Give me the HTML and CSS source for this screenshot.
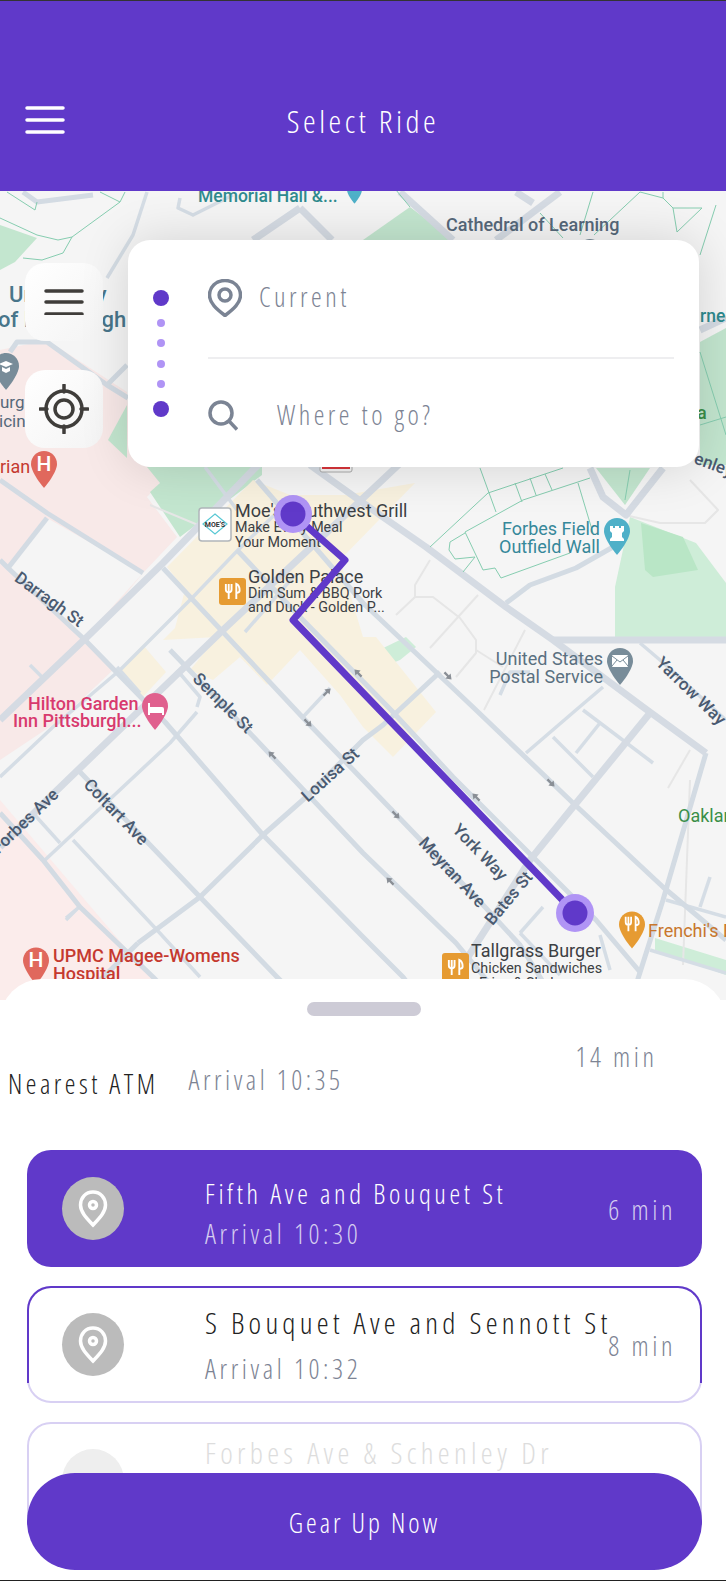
FILE: index.html
```html
<!DOCTYPE html>
<html lang="en">
<head>
    <meta charset="UTF-8">
    <meta name="viewport" content="width=device-width, initial-scale=1.0">
    <title>Select Ride</title>

    <link rel="stylesheet" href="styles.css">
</head>
<body>

<div id="app">
    <header id="topbar">
        <svg class="menu-icon" width="40" height="28" viewBox="0 0 40 28">
            <path d="M2 2h36M2 14h36M2 26h36" />
        </svg>
        <h1>Select Ride</h1>
    </header>

    <div id="map">
        <svg class="map-art" width="726" height="809" viewBox="0 191 726 809">
            <defs>
                <symbol id="pin" viewBox="0 0 26 37">
                    <path d="M13 0C5.8 0 0 5.8 0 13c0 9 13 24 13 24s13-15 13-24C26 5.8 20.2 0 13 0z" />
                </symbol>
                <symbol id="cutlery" viewBox="0 0 20 20">
                    <path class="cut" d="M3 2v6c0 2 1.500 3 3 3s3-1 3-3V2M6 2v16M14 18V2c2.500 1 3.500 4 3.500 7 0 1.500-1 2.500-3.500 2.500" />
                </symbol>
                <path id="arrow" d="M-5-1.200h5v-2.500l5 3.700-5 3.700v-2.500h-5z" />
            </defs>

            <rect class="land" x="0" y="191" width="726" height="809" />

            <!-- areas -->
            <polygon class="pink" points="0,350 47,340 127,392 130,440 160,483 147,497 177,537 143,573 88,640 113,670 60,720 0,760" />
            <polygon class="land" points="47,518 143,573 85,637 8,568" />
            <polygon class="pink-l" points="0,800 0,1000 170,1000" />
            <polygon class="green" points="147,467 262,467 262,475 180,537 150,492 160,483" />
            <polygon class="green" points="0,225 37,238 15,262 0,270" />
            <polygon class="green" points="127,405 108,440 127,458" />
            <polygon class="green" points="363,240 410,207 453,240" />
            <polygon class="green" points="596,468 650,468 625,505" />
            <polygon class="green" points="700,342 726,328 726,465 700,465" />
            <polygon class="green-l" points="615,637 615,587 630,517 696,543 726,583 726,637" />
            <polygon class="green-d" points="641,523 683,537 698,570 653,577 645,570" />
            <polygon class="green-l" points="373,653 406,637 416,647 400,660 383,667" />
            <polygon class="green-l" points="655,938 726,960 726,975 655,950" />
            <polygon class="beige" points="167,567 253,480 290,495 345,495 415,483 340,560 363,637 376,637 436,712 393,757 363,727 340,695 300,650 267,685 240,657 213,680 190,670 217,637 163,640 175,628 185,590" />
            <polygon class="beige" points="120,670 143,645 166,672 140,700" />

            <!-- paths -->
            <g class="walk">
                <polyline points="430,560 415,585 415,597 396,615" />
                <polyline points="415,597 433,597 460,618 476,640 476,653 456,677" />
                <polyline points="478,595 430,648" />
                <polyline points="476,650 503,667" />
                <polyline points="525,630 484,710" />
                <polyline points="625,515 660,523 705,523 718,510 690,480" />
                <polyline points="683,965 690,780" />
                <polyline points="690,750 668,788" />
                <polyline points="150,505 198,525" />
            </g>

            <!-- small streets -->
            <g class="road-t">
                <polyline points="147,192 133,235 107,278" />
                <polyline points="180,198 178,208 193,215 233,195" />
                <polyline points="237,510 205,467" />
                <polyline points="0,777 53,727 120,670 193,597 238,550 290,500" />
                <polyline points="45,860 170,743 197,712" />
                <polyline points="73,840 157,930 200,977" />
                <polyline points="33,813 60,843" />
                <polyline points="303,717 330,688" />
                <polyline points="117,667 140,693" />
                <polyline points="177,670 200,697 197,707" />
                <polyline points="30,665 43,678" />
                <polyline points="66,920 78,908 66,918" />
                <polyline points="526,753 576,710 603,687" />
                <polyline points="553,737 593,777" />
                <polyline points="576,753 600,723" />
                <polyline points="583,710 653,763" />
                <polyline points="640,643 660,660 726,720" />
                <polyline points="710,877 700,907" />
                <polyline points="520,933 543,907" />
                <polyline points="520,933 560,975" />
                <polyline points="666,900 726,917" />
                <polyline points="650,950 726,973" />
                <polyline points="610,970 600,935" />
                <polyline points="500,695 510,672 530,672" />
                <polyline points="245,632 295,575" />
            </g>

            <!-- streets -->
            <g class="road">
                <polyline points="10,352 17,342 47,342 107,385 128,398" />
                <polyline points="107,385 127,365" />
                <polyline points="23,192 37,202 93,195" />
                <polyline points="0,480 47,513 143,573" />
                <polyline points="47,518 8,568" />
                <polyline points="0,560 8,568 85,640 165,722 263,835 363,937 403,977 420,1000" />
                <polyline points="0,813 43,860 80,907 153,977 175,1000" />
                <polyline points="80,772 200,897 277,977 300,1000" />
                <polyline points="163,568 307,722 363,780 485,907 520,945 545,985" />
                <polyline points="170,650 247,730 363,853 456,943 495,990" />
                <polyline points="138,943 200,897 263,835 305,798 363,740 383,725 440,672" />
                <polyline points="237,550 300,617 391,710 453,777 533,857 596,920 640,972" />
                <polyline points="257,480 363,603 476,710 573,803 663,887 726,940" />
                <polyline points="506,603 530,585 576,568 613,547" />
                <polyline points="706,753 663,900 636,985" />
                <polyline points="80,1000 138,943" />
            </g>

            <!-- main roads -->
            <g class="road-m">
                <polyline points="0,720 87,637 163,563 253,470 300,425" />
                <polyline points="0,847 50,797 140,710 223,630 393,470 425,440" />
                <polyline points="310,465 380,515 426,547 506,607 553,640 643,707 706,753" />
                <polyline points="553,640 726,640" />
                <polyline points="650,713 573,807 530,860 450,985" />
                <polyline points="590,468 603,497 626,515 663,468" />
                <polyline points="400,192 453,240" />
                <polyline points="560,192 496,240" />
                <polyline points="516,192 533,203" />
                <polyline points="300,208 253,240" />
                <polyline points="300,208 332,240" />
                <polyline points="700,330 726,318" />
            </g>

            <!-- one way arrows -->
            <g class="arrows">
                <use href="#arrow" transform="translate(327 692) rotate(-45)" />
                <use href="#arrow" transform="translate(448 676) rotate(45)" />
                <use href="#arrow" transform="translate(272 755) rotate(225)" />
                <use href="#arrow" transform="translate(308 723) rotate(45)" />
                <use href="#arrow" transform="translate(476 797) rotate(225)" />
                <use href="#arrow" transform="translate(396 815) rotate(45)" />
                <use href="#arrow" transform="translate(390 881) rotate(225)" />
                <use href="#arrow" transform="translate(551 783) rotate(45)" />
                <use href="#arrow" transform="translate(358 673) rotate(225)" />
            </g>

            <!-- campus outlines -->
            <g class="outline">
                <polyline points="0,218 37,235 58,240 72,237 120,202 125,192" />
                <polyline points="72,237 63,253 42,260 23,258" />
                <polyline points="7,192 35,210 37,202" />
                <polyline points="100,192 120,202" />
                <polyline points="593,192 580,235" />
                <polyline points="640,192 594,235" />
                <polyline points="640,192 663,198 673,208 702,208 677,232 673,208" />
                <polyline points="663,192 663,198" />
                <polyline points="716,205 700,255" />
                <polyline points="540,213 563,238" />
                <polyline points="488,493 563,468" />
                <polyline points="430,547 488,493" />
                <polyline points="465,532 523,500 590,478" />
                <polyline points="465,532 483,570 495,568 501,578 570,553" />
                <polyline points="465,533 450,542 449,550 455,559 475,557 463,572" />
                <polyline points="480,468 496,512" />
                <polyline points="515,483 522,502" />
                <polyline points="530,478 536,495" />
                <polyline points="545,474 552,490" />
                <polyline points="578,483 593,533" />
                <polyline points="700,352 726,435" />
                <polyline points="700,425 726,417" />
                <polyline points="630,470 625,500" />
                <polyline points="396,190 410,207" />
            </g>

            <!-- places -->
            <text class="lb lb-teal lb-b" x="198" y="202">Memorial Hall &amp;...</text>
            <use href="#pin" class="pin-teal" x="347" y="182" width="15" height="22" />
            <text class="lb lb-slate lb-b lb-cath" x="446" y="231">Cathedral of Learning</text>
            <circle class="pin-slate" cx="590" cy="250" r="11" />

            <text class="lb lb-uni lb-b" x="9" y="302">University</text>
            <text class="lb lb-uni lb-b" x="-2" y="327">of Pittsburgh</text>
            <use href="#pin" class="pin-slate" x="-7" y="353" width="26" height="37" />
            <path class="cap" d="M-1 364l7-3 7 3-7 3zM2 367v4l4 2 4-2v-4l-4 2z" />
            <text class="lb lb-slate lb-s" x="0" y="408">urg</text>
            <text class="lb lb-slate lb-s" x="-1" y="427">icine</text>

            <text class="lb lb-teal lb-b" x="700" y="322">rnegie</text>
            <text class="lb lb-forest lb-b" x="697" y="419">a</text>
            <text class="lb lb-road" transform="translate(712 470) rotate(20)" text-anchor="middle">enley</text>

            <text class="lb lb-red" x="0" y="473">rian</text>
            <use href="#pin" class="pin-red" x="31" y="451" width="26" height="37" />
            <text class="lb lb-pinletter" x="44" y="471" text-anchor="middle">H</text>

            <rect class="sign" x="320" y="455" width="32" height="17" rx="2" />
            <rect class="sign-red" x="322" y="466" width="28" height="3" />

            <rect class="badge" x="199" y="508" width="32" height="33" rx="3" />
            <path class="badge-mark" d="M215 514l12 10-12 10-12-10z" />
            <text class="badge-text" x="215" y="527" text-anchor="middle">MOE'S</text>
            <text class="lb lb-dark" x="235" y="517">Moe's Southwest Grill</text>
            <text class="lb lb-dark lb-sm" x="235" y="532">Make Every Meal</text>
            <text class="lb lb-dark lb-sm" x="235" y="547">Your Moment</text>

            <rect class="food" x="219" y="578" width="27" height="27" rx="3" />
            <use href="#cutlery" x="223" y="582" width="19" height="19" />
            <text class="lb lb-dark" x="248" y="583">Golden Palace</text>
            <text class="lb lb-dark lb-sm" x="248" y="598">Dim Sum &amp; BBQ Pork</text>
            <text class="lb lb-dark lb-sm" x="248" y="612">and Duck - Golden P...</text>

            <text class="lb lb-teal2" x="600" y="535" text-anchor="end">Forbes Field</text>
            <text class="lb lb-teal2" x="600" y="553" text-anchor="end">Outfield Wall</text>
            <use href="#pin" class="pin-teal" x="604" y="518" width="26" height="37" />
            <path class="pin-mark" d="M610 527h3v2h2v-2h4v2h2v-2h3v5l-2 2v4l2 2v2h-14v-2l2-2v-4l-2-2z" transform="translate(0 -1)" />

            <text class="lb lb-usps" x="603" y="665" text-anchor="end">United States</text>
            <text class="lb lb-usps" x="603" y="683" text-anchor="end">Postal Service</text>
            <use href="#pin" class="pin-slate" x="607" y="648" width="26" height="37" />
            <rect class="pin-mark" x="612" y="655" width="16" height="12" rx="1" />
            <path class="env" d="M612 656l8 6 8-6M612 666l5-6M628 666l-5-6" />

            <text class="lb lb-pinkt lb-b" x="28" y="710">Hilton Garden</text>
            <text class="lb lb-pinkt lb-b" x="13" y="727">Inn Pittsburgh...</text>
            <use href="#pin" class="pin-pink" x="142" y="693" width="26" height="37" />
            <path class="pin-mark" d="M148 703h2v4h12a2 2 0 0 1 2 2v6h-2v-2h-12v2h-2z" />

            <text class="lb lb-forest" x="678" y="822">Oakland</text>
            <use href="#pin" class="pin-orange" x="619" y="911" width="26" height="38" />
            <use href="#cutlery" x="623" y="915" width="18" height="18" />
            <text class="lb lb-orange" x="648" y="937">Frenchi's Bar</text>

            <rect class="food" x="442" y="953" width="27" height="30" rx="3" />
            <use href="#cutlery" x="446" y="958" width="19" height="19" />
            <text class="lb lb-dark" x="471" y="957">Tallgrass Burger</text>
            <text class="lb lb-dark lb-sm" x="471" y="973">Chicken Sandwiches</text>
            <text class="lb lb-dark lb-sm" x="479" y="988">Fries &amp; Shakes</text>

            <use href="#pin" class="pin-red" x="23" y="947" width="26" height="38" />
            <text class="lb lb-pinletter" x="36" y="967" text-anchor="middle">H</text>
            <text class="lb lb-red lb-b" x="53" y="962">UPMC Magee-Womens</text>
            <text class="lb lb-red lb-b" x="53" y="980">Hospital</text>

            <!-- street names -->
            <text class="lb lb-road" transform="translate(46 604) rotate(36)" text-anchor="middle">Darragh St</text>
            <text class="lb lb-road" transform="translate(219 707) rotate(45)" text-anchor="middle">Semple St</text>
            <text class="lb lb-road" transform="translate(334 779) rotate(-42)" text-anchor="middle">Louisa St</text>
            <text class="lb lb-road" transform="translate(29 825) rotate(-44)" text-anchor="middle">Forbes Ave</text>
            <text class="lb lb-road" transform="translate(112 816) rotate(46)" text-anchor="middle">Coltart Ave</text>
            <text class="lb lb-road" transform="translate(448 876) rotate(47)" text-anchor="middle">Meyran Ave</text>
            <text class="lb lb-road" transform="translate(476 856) rotate(46)" text-anchor="middle">York Way</text>
            <text class="lb lb-road" transform="translate(513 902) rotate(-50)" text-anchor="middle">Bates St</text>
            <text class="lb lb-road" transform="translate(687 695) rotate(44)" text-anchor="middle">Yarrow Way</text>

            <!-- route -->
            <polyline class="route" points="293,514 345,560 293,620 575,913" />
            <circle class="stop-halo" cx="293" cy="514" r="19" />
            <circle class="stop" cx="293" cy="514" r="12.500" />
            <circle class="stop-halo" cx="575" cy="913" r="19" />
            <circle class="stop" cx="575" cy="913" r="12.500" />
        </svg>

        <div id="map-buttons">
            <button class="map-button">
                <svg width="40" height="26" viewBox="0 0 40 26"><path d="M2 2h36M2 13h36M2 25h36" /></svg>
            </button>
            <button class="map-button">
                <svg width="50" height="50" viewBox="0 0 50 50">
                    <circle cx="25" cy="25" r="18" />
                    <circle cx="25" cy="25" r="9" />
                    <path d="M25 1v7M25 42v7M1 25h7M42 25h7" />
                </svg>
            </button>
        </div>

        <div id="search-card">
            <div id="route-dots">
                <span class="dot-big"></span>
                <span class="dot-small"></span>
                <span class="dot-small"></span>
                <span class="dot-small"></span>
                <span class="dot-small"></span>
                <span class="dot-big"></span>
            </div>
            <div id="fields">
                <div class="field field-from">
                    <svg width="34" height="38" viewBox="0 0 34 38">
                        <path d="M17 1.500C8 1.500 1.500 8 1.500 16c0 8 7 14 15.500 20.500C25.500 30 32.500 24 32.500 16 32.500 8 26 1.500 17 1.500z" />
                        <circle cx="17" cy="16" r="6" />
                    </svg>
                    <span>Current</span>
                </div>
                <div class="field field-to">
                    <svg width="30" height="31" viewBox="0 0 30 31">
                        <circle cx="13" cy="13" r="11" />
                        <path d="M21 21l8 8.500" />
                    </svg>
                    <span>Where to go?</span>
                </div>
            </div>
        </div>
    </div>

    <section id="sheet">
        <div id="handle"></div>

        <div id="summary">
            <span class="summary-name">Nearest ATM</span>
            <span class="summary-arrival">Arrival 10:35</span>
            <span class="summary-time">14 min</span>
        </div>

        <ul id="stops">
            <li class="stop-card active">
                <span class="stop-icon">
                    <svg width="30" height="38" viewBox="0 0 30 38"><path d="M15 2C7.500 2 2.500 8 2.500 15c0 7 6 13 12.500 20 6.500-7 12.500-13 12.500-20C27.500 8 22.500 2 15 2z" /><circle cx="15" cy="15" r="3.500" /></svg>
                </span>
                <div class="stop-text">
                    <div class="stop-name">Fifth Ave and Bouquet St</div>
                    <div class="stop-arrival">Arrival 10:30</div>
                </div>
                <span class="stop-time">6 min</span>
            </li>
            <li class="stop-card outlined">
                <span class="stop-icon">
                    <svg width="30" height="38" viewBox="0 0 30 38"><path d="M15 2C7.500 2 2.500 8 2.500 15c0 7 6 13 12.500 20 6.500-7 12.500-13 12.500-20C27.500 8 22.500 2 15 2z" /><circle cx="15" cy="15" r="3.500" /></svg>
                </span>
                <div class="stop-text">
                    <div class="stop-name">S Bouquet Ave and Sennott St</div>
                    <div class="stop-arrival">Arrival 10:32</div>
                </div>
                <span class="stop-time">8 min</span>
            </li>
            <li class="stop-card faded">
                <span class="stop-icon"></span>
                <div class="stop-text">
                    <div class="stop-name">Forbes Ave &amp; Schenley Dr</div>
                </div>
            </li>
        </ul>

        <button id="gear-up">Gear Up Now</button>
    </section>
</div>

</body>
</html>
```

FILE: styles.css
```css
* {
    box-sizing: border-box;
    font-family: "Open Sans", Roboto, "Liberation Sans", sans-serif;
    font-stretch: 75%;
    font-weight: 300;
}

body {
    margin: 0;
    padding: 0;
    background-color: white;
}

#app {
    width: 726px;
    height: 1581px;
    display: flex;
    flex-direction: column;
    overflow: hidden;
}

#topbar {
    height: 191px;
    flex-shrink: 0;
    display: grid;
    grid-template-columns: 1fr auto 1fr;
    align-items: center;
    padding: 51px 25px 0 25px;
    background-color: #6039c9;
    border-top: 1px solid #333;
    color: white;
}
#topbar > h1 {
    margin: -3px 0 0 0;
    font-size: 32px;
    letter-spacing: 3.500px;
    color: white;
}
.menu-icon {
    margin-top: -4px;
}
.menu-icon path {
    fill: none;
    stroke: white;
    stroke-width: 3.500;
    stroke-linecap: round;
}

#map {
    position: relative;
    height: 809px;
    flex-shrink: 0;
    overflow: hidden;
}
.map-art {
    display: block;
}

/* map drawing */
.land { fill: #f5f5f5; }
.pink { fill: #f8e9e8; }
.pink-l { fill: #fbeceb; }
.green { fill: #c3e6cf; }
.green-l { fill: #ceedd8; }
.green-d { fill: #b9e6c6; }
.beige { fill: #f8f1df; }
.road-m polyline, .road polyline, .road-t polyline, .walk polyline, .outline polyline, .route {
    fill: none;
    stroke-linejoin: round;
}
.road-m polyline { stroke: #d5dbe3; stroke-width: 7; }
.road polyline { stroke: #d3dbe3; stroke-width: 5; }
.road-t polyline { stroke: #d5dde5; stroke-width: 3.500; }
.walk polyline { stroke: #e6e6e6; stroke-width: 2; }
.outline polyline { stroke: #86cdb0; stroke-width: 1; }
.arrows { fill: #8a8f96; }
.route { stroke: #6039c9; stroke-width: 7; }
.stop-halo { fill: #b094f5; }
.stop { fill: #6039c9; }

.lb {
    font-family: Roboto, "Liberation Sans", sans-serif;
    font-stretch: 100%;
    font-size: 18px;
    font-weight: 400;
}
.lb-b { font-weight: 500; }
.lb-sm { font-size: 14.300px; }
.lb-s { font-size: 17px; }
.lb-dark { fill: #3c4043; }
.lb-teal { fill: #2f8a8e; font-size: 17.500px; }
.lb-teal2 { fill: #36889a; }
.lb-slate { fill: #56687a; font-size: 17px; }
.lb-cath { font-size: 18px; }
.lb-uni { fill: #48758a; font-size: 22px; }
.lb-usps { fill: #5a7080; }
.lb-red { fill: #c5392f; }
.lb-pinkt { fill: #d83a6e; }
.lb-forest { fill: #3a8f48; }
.lb-orange { fill: #c8772d; }
.lb-road { fill: #4a5a70; font-size: 17px; font-weight: 500; }
.lb-pinletter { fill: white; font-size: 21px; font-weight: 500; }

.pin-red { fill: #e0685d; }
.pin-teal { fill: #4fb0c8; }
.pin-slate { fill: #788c99; }
.pin-pink { fill: #e0608e; }
.pin-orange { fill: #e69b32; }
.pin-mark { fill: white; }
.cap { fill: white; }
.env { fill: none; stroke: #788c99; stroke-width: 1; }
.food { fill: #e69b32; }
.cut { fill: none; stroke: white; stroke-width: 2; }
.sign { fill: #f3f3f3; stroke: #aaa; }
.sign-red { fill: #d8343a; }
.badge { fill: white; stroke: #b0b5ba; stroke-width: 1.500; }
.badge-mark { fill: none; stroke: #58c8d4; stroke-width: 1.200; }
.badge-text { font-family: Roboto, sans-serif; font-stretch: 100%; font-size: 7px; font-weight: 700; fill: #333; }

/* buttons over the map */
#map-buttons {
    position: absolute;
    left: 25px;
    top: 72px;
    display: flex;
    flex-direction: column;
    gap: 29px;
}
.map-button {
    width: 78px;
    height: 78px;
    display: flex;
    align-items: center;
    justify-content: center;
    padding: 0;
    border: none;
    border-radius: 20px;
    background: linear-gradient(135deg, white, #f4f4f4);
}
.map-button svg * {
    fill: none;
    stroke: #3f3d3a;
    stroke-width: 3.500;
    stroke-linecap: round;
}

/* search card */
#search-card {
    position: absolute;
    left: 128px;
    top: 49px;
    width: 571px;
    height: 227px;
    display: flex;
    padding: 50px 25px 0 25px;
    background-color: white;
    border-radius: 22px;
    box-shadow: 0 0 50px rgba(0, 0, 0, 0.14);
}
#route-dots {
    width: 16px;
    height: 127px;
    display: flex;
    flex-direction: column;
    align-items: center;
    justify-content: space-between;
}
.dot-big {
    width: 16px;
    height: 16px;
    border-radius: 50%;
    background-color: #6039c9;
}
.dot-small {
    width: 8px;
    height: 8px;
    border-radius: 50%;
    background-color: #b094f5;
}
#fields {
    flex-grow: 1;
    margin: -11px 0 0 39px;
}
.field {
    display: flex;
    align-items: center;
    font-size: 27px;
    letter-spacing: 3.500px;
    color: #7d8494;
}
.field > span {
    color: #7d8494;
}
.field svg * {
    fill: none;
    stroke: #7b8494;
    stroke-width: 3.500;
}
.field-from {
    gap: 17px;
    height: 80px;
    padding-bottom: 40px;
    border-bottom: 2px solid #eeeef0;
}
.field-from > span {
    margin-top: -4px;
}
.field-to {
    gap: 39px;
    margin-top: 39px;
}
.field-to > span {
    margin-top: -2px;
}

/* bottom sheet */
#sheet {
    position: relative;
    flex-grow: 1;
    margin-top: -21px;
    background-color: white;
    border-radius: 42px 42px 0 0;
    border-bottom: 1px solid #222;
    overflow: hidden;
}
#handle {
    width: 114px;
    height: 14px;
    margin: 23px 0 0 307px;
    border-radius: 7px;
    background-color: #cdcbd6;
}
#summary {
    display: flex;
    align-items: flex-end;
    height: 86px;
    padding: 0 0 0 8px;
    font-size: 27px;
    letter-spacing: 3.500px;
}
.summary-name {
    color: #222;
}
.summary-arrival {
    margin: 0 0 4px 30px;
    color: #7d8494;
}
.summary-time {
    margin: 0 0 27px 232px;
    color: #7d8494;
}

#stops {
    list-style: none;
    margin: 48px 24px 0 27px;
    padding: 0;
    display: flex;
    flex-direction: column;
    gap: 19px;
}
.stop-card {
    position: relative;
    height: 117px;
    flex-shrink: 0;
    display: flex;
    align-items: center;
    padding: 0 26px 0 35px;
    border-radius: 24px;
}
.stop-icon {
    width: 62px;
    height: 63px;
    flex-shrink: 0;
    display: flex;
    align-items: center;
    justify-content: center;
    border-radius: 50%;
    background-color: #bbb;
}
.stop-icon path, .stop-icon circle {
    fill: none;
    stroke: white;
    stroke-width: 3.500;
}
.stop-text {
    flex: 1;
    min-width: 0;
    margin-left: 81px;
    padding-top: 9px;
    white-space: nowrap;
}
.stop-name {
    font-size: 27px;
    letter-spacing: 3.600px;
    color: #222;
}
.stop-arrival {
    margin-top: 3px;
    font-size: 27px;
    letter-spacing: 3.600px;
    color: #7d8494;
}
.stop-time {
    flex-shrink: 0;
    margin-top: 2px;
    font-size: 27px;
    letter-spacing: 3.600px;
    color: #7d8494;
}
.active {
    background-color: #6039c9;
}
.active .stop-name {
    color: white;
}
.active .stop-arrival, .active .stop-time {
    color: #d5cdf0;
}
.outlined, .faded {
    padding: 0 24px 0 33px;
    border: 2px solid #d8d0f3;
}
.outlined::before {
    content: "";
    position: absolute;
    left: -2px;
    right: -2px;
    top: -2px;
    height: 95px;
    border: 2px solid #6039c9;
    border-bottom: none;
    border-radius: 24px 24px 0 0;
}
.outlined .stop-text {
    padding-top: 0;
}
.outlined .stop-name {
    font-size: 30px;
    letter-spacing: 4.200px;
}
.outlined .stop-arrival {
    margin-top: 7px;
}
.faded .stop-icon {
    background-color: #eee;
}
.faded .stop-name {
    margin-top: -53px;
    font-size: 30px;
    letter-spacing: 4.300px;
    color: #ddd;
}

#gear-up {
    position: absolute;
    left: 27px;
    bottom: 10px;
    width: 675px;
    height: 97px;
    padding: 2px 0 0 0;
    border: none;
    border-radius: 48px;
    background-color: #6039c9;
    color: white;
    font-size: 27px;
    letter-spacing: 3px;
}
```
